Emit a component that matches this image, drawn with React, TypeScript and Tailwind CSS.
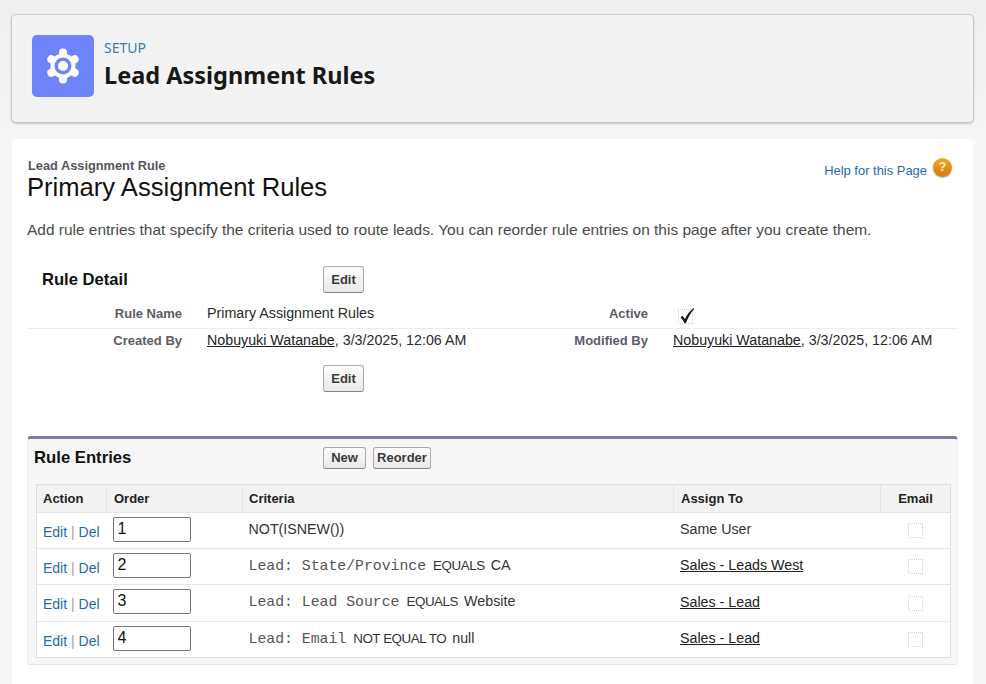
const arial = 'font-["Liberation_Sans",Arial,sans-serif]';

const entries = [
    { order: '1', field: '', op: '', value: 'NOT(ISNEW())', assign: 'Same User', link: false },
    { order: '2', field: 'Lead: State/Province', op: 'EQUALS', value: 'CA', assign: 'Sales - Leads West', link: true },
    { order: '3', field: 'Lead: Lead Source', op: 'EQUALS', value: 'Website', assign: 'Sales - Lead', link: true },
    { order: '4', field: 'Lead: Email', op: 'NOT EQUAL TO', value: 'null', assign: 'Sales - Lead', link: true },
];

function SfButton({ label, className = '' }: { label: string; className?: string }) {
    return (
        <button className={`rounded-[3px] border border-[#a9a9a9] border-b-[#858585] bg-gradient-to-b from-[#fdfdfd] to-[#e9e9e9] pb-[1px] text-[13px] font-bold leading-none text-[#3a3a3a] ${className}`}>
            {label}
        </button>
    );
}

function Check({ checked = false, className = '' }: { checked?: boolean; className?: string }) {
    return (
        <span className={`relative block h-[15px] w-[15px] border border-dotted border-[#cfcfcf] ${className}`}>
            {checked && (
                <svg viewBox="0 0 18 18" className="absolute -left-[1px] -top-[3px] h-[18px] w-[18px]">
                    <path d="M2.5 10.5 L4.6 8.8 L7 12 C9 7.5 12 3.8 15.8 1 L16.4 1.8 C12.8 5.6 10 10.5 8 16 L6.4 16 C5.4 13.8 4.2 12 2.5 10.5 Z" fill="#1a1a1a" />
                </svg>
            )}
        </span>
    );
}

function GearIcon() {
    const angles = [0, 60, 120, 180, 240, 300];
    return (
        <svg viewBox="0 0 36 36" className="h-[36px] w-[36px]">
            <circle cx="18" cy="18" r="12.5" fill="#fff" />
            {angles.map((a) => (
                <line key={a} x1="18" y1="18" x2="18" y2="4.5" stroke="#fff" strokeWidth="8" strokeLinecap="round" transform={`rotate(${a} 18 18)`} />
            ))}
            <circle cx="18" cy="18" r="6.8" fill="none" stroke="#6f84fb" strokeWidth="3.4" />
        </svg>
    );
}

export default function App() {
    return (
        <div className="h-[684px] w-[986px] overflow-hidden bg-gradient-to-b from-[#eeeeee] to-[#f6f6f6] to-[140px] px-[11px] pt-[14px]">
            <header className="flex h-[109px] w-[963px] gap-[10px] rounded-[5px] border border-[#c9c9c9] bg-[#f3f3f3] pl-[20px] pt-[20px] shadow-[0_1px_2px_rgba(0,0,0,0.18)] font-['Noto_Sans',sans-serif]">
                <div className="flex h-[62px] w-[62px] items-center justify-center rounded-[5px] bg-[#6f84fb]">
                    <GearIcon />
                </div>
                <div>
                    <div className="mt-[3px] text-[14px] leading-[20px] text-[#3f7ea6]">SETUP</div>
                    <h1 className="mt-[1px] text-[23.5px] font-bold leading-[32px] text-[#181818]">Lead Assignment Rules</h1>
                </div>
            </header>

            <main className={`ml-[1px] mt-[16px] h-[560px] w-[961px] rounded-t-[3px] bg-white pl-[15px] pr-[15px] pt-[18px] text-[#2b2b2b] ${arial}`}>
                <div className="flex justify-between">
                    <div>
                        <div className="ml-[1px] mt-[1px] text-[12.8px] font-bold leading-[15px] text-[#55555f]">Lead Assignment Rule</div>
                        <div className="text-[25.6px] leading-[28px] text-[#111]">Primary Assignment Rules</div>
                    </div>
                    <div className="mr-[6px] flex h-[20px] items-center gap-[6px] text-[12.95px] text-[#1f6ba5]">
                        <span className="mt-[7px]">Help for this Page</span>
                        <span className="flex h-[19px] w-[19px] items-center justify-center rounded-full bg-gradient-to-b from-[#f5a623] to-[#d07d10] text-[13px] font-bold text-[#fdf0d0] shadow-[0_1px_1px_rgba(0,0,0,0.3)]">?</span>
                    </div>
                </div>

                <p className="mt-[19px] text-[15.46px] leading-[20px] text-[#4a4a4a]">
                    Add rule entries that specify the criteria used to route leads. You can reorder rule entries on this page after you create them.
                </p>

                <section className="mt-[26px]">
                    <div className="flex h-[28px] items-center">
                        <h2 className="ml-[15px] w-[281px] text-[16.6px] font-bold text-[#111]">Rule Detail</h2>
                        <SfButton label="Edit" className="-mt-[1px] h-[27px] w-[41px]" />
                    </div>
                    <div className="mt-[9px] flex h-[26px] items-center border-b border-[#ececec] pb-[3px] text-[14.25px]">
                        <div className="w-[155px] text-right text-[13px] font-bold text-[#5c5c66]">Rule Name</div>
                        <div className="ml-[25px] w-[311px]">Primary Assignment Rules</div>
                        <div className="w-[130px] text-right text-[13px] font-bold text-[#5c5c66]">Active</div>
                        <Check checked className="ml-[30px] mt-[4px]" />
                    </div>
                    <div className="flex h-[24px] items-center text-[14.25px]">
                        <div className="w-[155px] text-right text-[13px] font-bold text-[#5c5c66]">Created By</div>
                        <div className="ml-[25px] w-[311px]"><span className="text-[#222] underline">Nobuyuki Watanabe</span>, 3/3/2025, 12:06 AM</div>
                        <div className="w-[130px] text-right text-[13px] font-bold text-[#5c5c66]">Modified By</div>
                        <div className="ml-[25px]"><span className="text-[#222] underline">Nobuyuki Watanabe</span>, 3/3/2025, 12:06 AM</div>
                    </div>
                    <div className="mt-[12px] pl-[296px]">
                        <SfButton label="Edit" className="h-[27px] w-[41px]" />
                    </div>
                </section>

                <section className="mt-[44px] h-[229px] w-[931px] rounded-[4px] border-x border-b border-t-[3px] border-x-[#eeeeee] border-b-[#e4e4e4] border-t-[#7a7e9a] bg-[#f7f7f7] pl-[8px] pr-[6px]">
                    <div className="flex h-[36px] items-center pt-[2px]">
                        <h2 className="-ml-[2px] w-[289px] text-[16.7px] font-bold text-[#111]">Rule Entries</h2>
                        <SfButton label="New" className="h-[22px] w-[43px]" />
                        <SfButton label="Reorder" className="ml-[7px] h-[22px] w-[58px]" />
                    </div>
                    <table className="mt-[9px] w-[915px] table-fixed border-collapse border border-[#dfdfdf] bg-white text-[14.25px]">
                        <thead>
                            <tr className="h-[28px] bg-[#f3f3f3] text-left text-[13px] font-bold text-[#222]">
                                <th className="w-[70px] border-r border-[#e6e6e6] pl-[6px]">Action</th>
                                <th className="w-[136px] border-r border-[#e6e6e6] pl-[7px]">Order</th>
                                <th className="w-[431px] border-r border-[#e6e6e6] pl-[6px]">Criteria</th>
                                <th className="w-[207px] border-r border-[#e6e6e6] pl-[7px]">Assign To</th>
                                <th className="text-center">Email</th>
                            </tr>
                        </thead>
                        <tbody>
                            {entries.map((r, i) => (
                                <tr key={r.order} className={`${i === 2 ? 'h-[37px]' : 'h-[36px]'} border-t border-[#e6e6e6]`}>
                                    <td className="pl-[6px] pt-[3px] text-[14px] text-[#1f6ba5]">
                                        Edit <span className="text-[#a0a0a0]">|</span> Del
                                    </td>
                                    <td className="pl-[6px]">
                                        <input
                                            readOnly
                                            value={r.order}
                                            className="-mt-[2px] mb-[1px] block h-[25px] w-[78px] rounded-[2px] border border-[#767676] bg-white pb-[1px] pl-[4px] text-[16px] text-[#111]"
                                        />
                                    </td>
                                    <td className={`whitespace-nowrap pl-[6px] text-[#333] ${r.link ? 'pb-[1px]' : 'pb-[2px]'}`}>
                                        {r.field && <span className="mr-[7px] font-['Liberation_Mono',monospace] text-[14.8px] text-[#555]">{r.field}</span>}
                                        {r.op && <span className="mr-[6px] text-[13.4px] tracking-[-0.45px]">{r.op}</span>}
                                        {r.value}
                                    </td>
                                    <td className={`pl-[6.5px] text-[#333] ${r.link ? 'pb-[1px]' : 'pb-[2px]'}`}>
                                        {r.link ? <span className="text-[#222] underline">{r.assign}</span> : r.assign}
                                    </td>
                                    <td className="pl-[1px]">
                                        <Check className="mx-auto" />
                                    </td>
                                </tr>
                            ))}
                        </tbody>
                    </table>
                </section>
            </main>
        </div>
    );
}
